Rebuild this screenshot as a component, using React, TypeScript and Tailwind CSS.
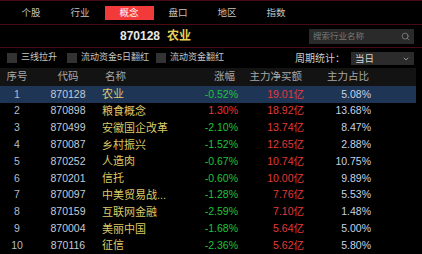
import React from "react";
import { Search, ChevronDown } from "lucide-react";

const rows = [
  ["1", "870128", "农业", "-0.52%", "19.01亿", "5.08%"],
  ["2", "870898", "粮食概念", "1.30%", "18.92亿", "13.68%"],
  ["3", "870499", "安徽国企改革", "-2.10%", "13.74亿", "8.47%"],
  ["4", "870087", "乡村振兴", "-1.52%", "12.65亿", "2.88%"],
  ["5", "870252", "人造肉", "-0.67%", "10.74亿", "10.75%"],
  ["6", "870201", "信托", "-0.60%", "10.00亿", "9.89%"],
  ["7", "870097", "中美贸易战...", "-1.28%", "7.76亿", "5.53%"],
  ["8", "870159", "互联网金融", "-2.59%", "7.10亿", "1.48%"],
  ["9", "870004", "美丽中国", "-1.68%", "5.64亿", "5.00%"],
  ["10", "870116", "征信", "-2.36%", "5.62亿", "5.80%"],
];

const tabs = ["个股", "行业", "概念", "盘口", "地区", "指数"];

function Box({ label }: { label: string }) {
  return (
    <div className="flex items-center">
      <div className="w-[10px] h-[10px] bg-[#333333] mr-[4px]" />
      <span className="text-[9px] text-[#c8c8c8]">{label}</span>
    </div>
  );
}

export default function App() {
  return (
    <div
      className="w-[422px] h-[254px] bg-black overflow-hidden"
      style={{ fontFamily: '"Liberation Sans", "Noto Sans CJK SC", sans-serif' }}
    >
      <div className="h-[25px] border-t border-b border-[#4a0c14] flex items-center pl-[6.5px]">
        {tabs.map((t) => (
          <div key={t} className="w-[49px] flex justify-center">
            {t === "概念" ? (
              <div className="w-[49px] h-[14px] bg-[#f23a3a] text-white text-[9.5px] flex items-center justify-center leading-none">
                {t}
              </div>
            ) : (
              <span className="text-[9.5px] text-[#c4c4c4] leading-none">{t}</span>
            )}
          </div>
        ))}
      </div>
      <div className="h-[23px] border-b border-[#4a0c14] flex items-center">
        <div className="flex-1 flex justify-center items-center gap-[7px] pl-[2px]">
          <span className="text-[12px] font-bold text-[#e8e8e8]">870128</span>
          <span className="text-[12px] font-bold text-[#e6d05a]">农业</span>
        </div>
        <div className="w-[105px] h-[15px] bg-[#2a2a2a] mr-[8px] flex items-center justify-between pl-[4px] pr-[4px]">
          <span className="text-[8.5px] text-[#777777] leading-none">搜索行业名称</span>
          <Search size={9} color="#8a8a8a" strokeWidth={2} />
        </div>
      </div>
      <div className="h-[20px] flex items-center pl-[7px]">
        <Box label="三线拉升" />
        <div className="ml-[10px]"><Box label="流动资金5日翻红" /></div>
        <div className="ml-[7px]"><Box label="流动资金翻红" /></div>
        <div className="flex-1" />
        <span className="text-[10px] text-[#d0d0d0] mr-[6px]">周期统计：</span>
        <div className="w-[63px] h-[13px] bg-[#2b2b2b] mr-[8px] flex items-center justify-between pl-[4px] pr-[4px] mt-[1px]">
          <span className="text-[9.5px] text-[#d8d8d8] leading-none">当日</span>
          <ChevronDown size={8} color="#aaaaaa" strokeWidth={2.5} />
        </div>
      </div>
      <div className="h-[18px] bg-[#131313] flex items-center text-[10.5px] text-[#a8a8a8] w-[416px]">
        <div className="w-[34px] text-center">序号</div>
        <div className="w-[68px] text-center">代码</div>
        <div className="w-[96px] pl-[3px]">名称</div>
        <div className="w-[40px] text-right pr-[3px]">涨幅</div>
        <div className="w-[66px] text-right pr-[2px]">主力净买额</div>
        <div className="w-[67px] text-right pr-[2px]">主力占比</div>
      </div>
      {rows.map((r, i) => {
        const up = !r[3].startsWith("-");
        return (
          <div
            key={r[0]}
            className={`h-[16.8px] flex items-center text-[10.5px] w-[416px] ${i === 0 ? "bg-[#1e3556]" : ""}`}
          >
            <div className="w-[34px] text-center text-[#b4bccb]">{r[0]}</div>
            <div className="w-[68px] text-center text-[#c4ccda]">{r[1]}</div>
            <div className="w-[96px] text-[11px] text-[#dcc968]">{r[2]}</div>
            <div className={`w-[40px] text-right ${up ? "text-[#ee3434]" : "text-[#1fc23a]"}`}>{r[3]}</div>
            <div className="w-[66px] text-right text-[#e23a3a]">{r[4]}</div>
            <div className="w-[67px] text-right text-[#c8d2e4]">{r[5]}</div>
          </div>
        );
      })}
    </div>
  );
}
